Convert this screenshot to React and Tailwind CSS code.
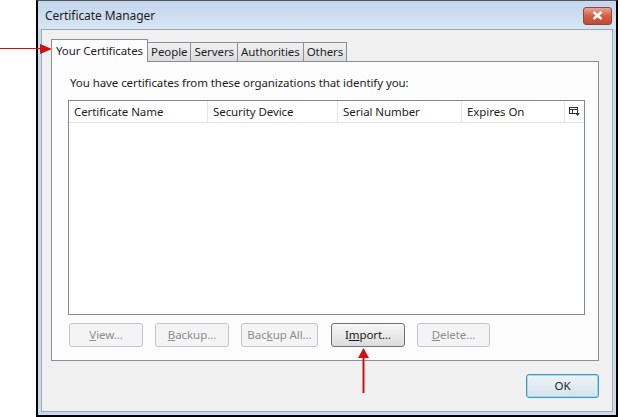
import React from 'react';

const font = { fontFamily: '"Noto Sans", "Open Sans", sans-serif', letterSpacing: '-0.08px' };

const tabs = ['People', 'Servers', 'Authorities', 'Others'];

const columns = [
  { name: 'Certificate Name', w: 'w-[139px]' },
  { name: 'Security Device', w: 'w-[130px]' },
  { name: 'Serial Number', w: 'w-[124px]' },
  { name: 'Expires On', w: 'w-[103px]' },
];

const Btn = ({ children, disabled, className = '' }) => (
  <div
    className={`flex h-[24px] items-center justify-center rounded-[3px] border text-[11.5px] ${
      disabled
        ? 'border-[#c2c5c9] bg-[#f4f4f4] text-[#8d8d8d]'
        : 'border-[#707070] bg-gradient-to-b from-[#f6f6f6] to-[#dcdcdc] text-[#1a1a1a]'
    } ${className}`}
  >
    {children}
  </div>
);

export default function App() {
  return (
    <div className="relative h-[417px] w-[621px] bg-white" style={font}>
      {/* left red arrow */}
      <div className="absolute left-0 top-[48px] h-[1px] w-[44px] bg-[#d01010]" />
      <svg className="absolute left-[40px] top-[43px]" width="12" height="12" viewBox="0 0 12 12">
        <polygon points="0,1 12,6 0,11" fill="#d01010" />
      </svg>

      <div className="ml-[36px] flex h-[417px] w-[582px] flex-col border-x-2 border-b-2 border-t border-x-black border-b-black border-t-[#555]">
        {/* title bar */}
        <div className="flex h-[28px] shrink-0 items-center justify-between bg-gradient-to-b from-[#c2d6ee] to-[#d8e5f4] pl-[7px] pr-[4px] pt-[1px]">
          <span className="text-[12px] text-[#1e1e1e]">Certificate Manager</span>
          <div className="flex h-[18px] w-[29px] items-center justify-center rounded-[3px] border border-[#8a4a3e] bg-gradient-to-b from-[#e8a394] via-[#d35e45] to-[#c44a30]">
            <svg width="11" height="9" viewBox="0 0 11 9">
              <path d="M1.5 1 L9.5 8 M9.5 1 L1.5 8" stroke="#fff" strokeWidth="2.4" />
            </svg>
          </div>
        </div>

        {/* client area */}
        <div className="flex flex-1 flex-col bg-[#c9dbef] px-[3px] pb-[3px]">
          <div className="flex flex-1 flex-col border border-[#9aa9b8] bg-[#f0f0f0] pl-[9px] pr-[13px] pt-[8px]">
            {/* tabs */}
            <div className="flex h-[23px] items-end">
              <div className="relative z-10 -mb-[1px] flex h-[23px] w-[97px] items-center justify-center border-x border-t border-[#8c8e94] bg-[#fcfcfc] text-[11.5px] text-[#1e1e1e]">
                Your Certificates
              </div>
              {tabs.map((t) => (
                <div
                  key={t}
                  className="-ml-[1px] flex h-[19px] items-center border border-b-0 border-[#8c8e94] bg-gradient-to-b from-[#f2f2f2] to-[#dcdcdc] px-[3px] text-[11.5px] text-[#1e1e1e] first:ml-0"
                >
                  {t}
                </div>
              ))}
            </div>

            {/* tab panel */}
            <div className="flex h-[300px] flex-col border border-[#8c8e94] bg-[#fcfcfc] pl-[16px] pr-[13px] pt-[12px]">
              <div className="h-[26px] pl-[2px] text-[11.5px] text-[#1e1e1e]">
                You have certificates from these organizations that identify you:
              </div>
              <div className="flex h-[215px] flex-col border border-[#828790] bg-white">
                <div className="flex h-[22px] border-b border-[#e5e5e5] text-[11.5px] text-[#1e1e1e]">
                  {columns.map((c) => (
                    <div key={c.name} className={`${c.w} flex items-center border-r border-[#e5e5e5] pl-[5px]`}>
                      {c.name}
                    </div>
                  ))}
                  <div className="flex flex-1 items-center justify-center">
                    <svg width="11" height="9" viewBox="0 0 11 9">
                      <rect x="0.5" y="0.5" width="8" height="6" fill="none" stroke="#333" />
                      <path d="M0.5 2.5 H8.5 M3.5 2.5 V6.5" stroke="#333" />
                      <path d="M6 6 H11 L8.5 9 Z" fill="#333" />
                    </svg>
                  </div>
                </div>
              </div>
              <div className="mt-[8px] flex pl-[1px]">
                <Btn disabled className="w-[74px]">
                  <span><u>V</u>iew...</span>
                </Btn>
                <Btn disabled className="ml-[12px] w-[74px]">
                  <span><u>B</u>ackup...</span>
                </Btn>
                <Btn disabled className="ml-[12px] w-[77px]">
                  <span>Bac<u>k</u>up All...</span>
                </Btn>
                <Btn className="ml-[13px] w-[74px]">
                  <span>I<u>m</u>port...</span>
                </Btn>
                <Btn disabled className="ml-[12px] w-[73px]">
                  <span><u>D</u>elete...</span>
                </Btn>
              </div>
            </div>

            {/* footer */}
            <div className="flex justify-end pr-[0px] pt-[13px]">
              <div className="flex h-[24px] w-[73px] items-center justify-center rounded-[3px] border border-[#3c9ac6] bg-gradient-to-b from-[#eef4f8] to-[#d5e2ec] text-[11.5px] text-[#1e1e1e] shadow-[inset_0_0_0_1px_#9fd8ef]">
                OK
              </div>
            </div>
          </div>
        </div>
      </div>

      {/* import arrow */}
      <svg className="absolute left-[357px] top-[348px]" width="13" height="46" viewBox="0 0 13 46">
        <polygon points="6.5,0 12,10 1,10" fill="#d01010" />
        <rect x="5.5" y="9" width="2" height="36" fill="#d01010" />
      </svg>
    </div>
  );
}
